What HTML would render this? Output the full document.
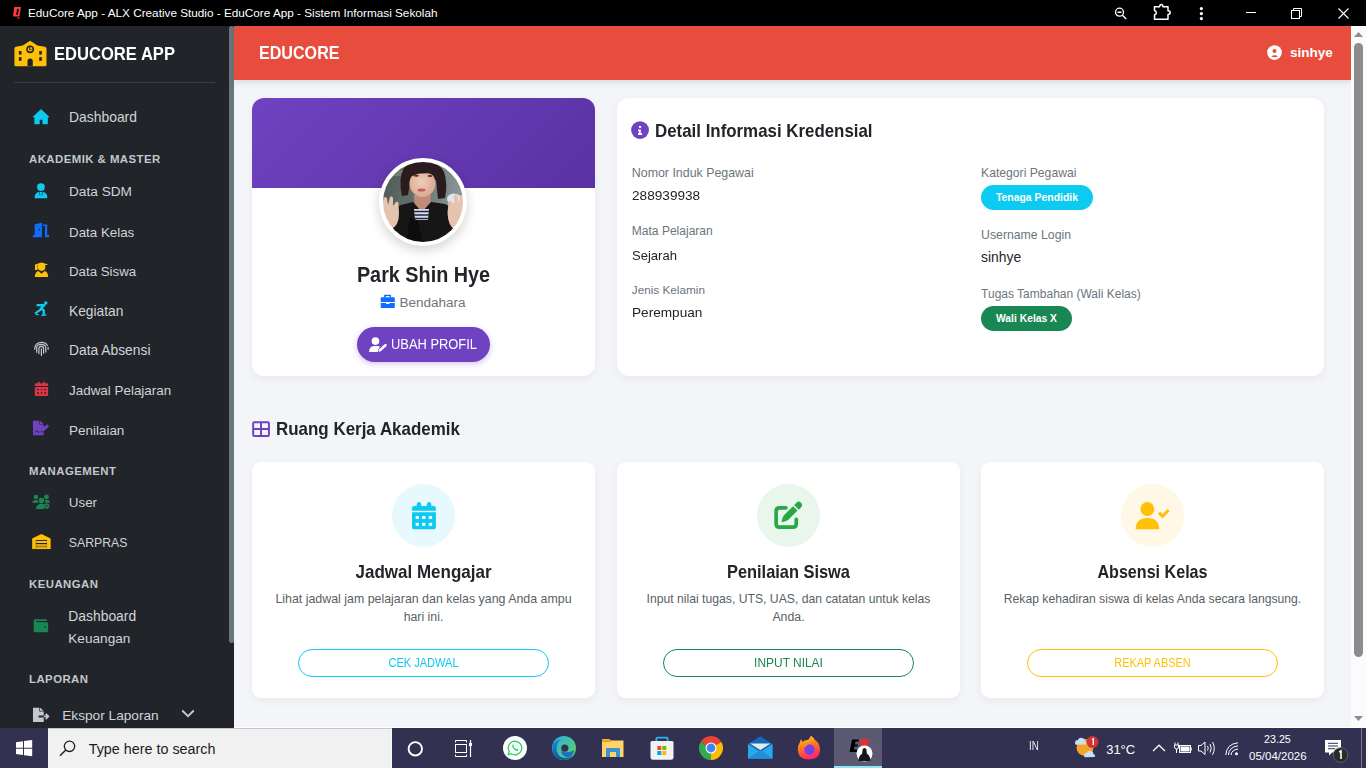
<!DOCTYPE html><html><head><meta charset="utf-8"><style>
*{margin:0;padding:0;box-sizing:border-box}
html,body{width:1366px;height:768px;overflow:hidden;background:#f3f5f9;font-family:"Liberation Sans",sans-serif}
.t{position:absolute;line-height:1;white-space:nowrap}
svg{position:absolute;overflow:visible}
</style></head><body>
<div style="position:absolute;left:0px;top:0px;width:1366px;height:26px;background:#000"></div>
<div class="t" style="left:28px;top:6.75px;font-size:11.76px;color:#fff;font-weight:400;">EduCore App - ALX Creative Studio - EduCore App - Sistem Informasi Sekolah</div>
<svg style="left:8px;top:2px" width="24" height="24" viewBox="0 0 768 768" ><path fill-rule="evenodd" d="M200 160 L415 160 L365 465 L160 465Z M290 225 L345 225 L320 410 L258 410Z" fill="#ff3b3b"/><rect x="290" y="490" width="90" height="45" fill="#c02020"/></svg>
<svg style="left:1114px;top:7px" width="14" height="13" viewBox="0 0 14 13"><circle cx="5.5" cy="5.2" r="4" stroke="#fff" stroke-width="1.3" fill="none"/><path d="M3.5 5.2 L7.5 5.2 M8.4 8.2 L12.2 12" stroke="#fff" stroke-width="1.4"/></svg>
<svg style="left:1153px;top:4px" width="19" height="17" viewBox="0 0 19 17"><path d="M1.5 2.8 L6.5 2.8 Q6.8 0.5 8.3 0.5 Q9.8 0.5 10.1 2.8 L15 2.8 L15 6.7 Q17.2 6.9 17.2 8.6 Q17.2 10.4 15 10.6 L15 15.3 L1.5 15.3 L1.5 10.8 Q3.3 10.5 3.3 8.7 Q3.3 6.9 1.5 6.6 Z" stroke="#fff" stroke-width="1.5" fill="none" stroke-linejoin="round"/></svg>
<svg style="left:1198px;top:6px" width="6" height="15" viewBox="0 0 6 15"><circle cx="3.4" cy="2.6" r="1.6" fill="#fff"/><circle cx="3.4" cy="7.6" r="1.6" fill="#fff"/><circle cx="3.4" cy="12.6" r="1.6" fill="#fff"/></svg>
<div style="position:absolute;left:1246px;top:12px;width:10px;height:1px;background:#fff"></div>
<svg style="left:1291px;top:8px" width="12" height="11" viewBox="0 0 12 11"><rect x="0.5" y="2.5" width="8" height="8" stroke="#fff" stroke-width="1" fill="none"/><path d="M2.5 2.5 L2.5 0.5 L10.5 0.5 L10.5 8.5 L8.5 8.5" stroke="#fff" stroke-width="1" fill="none"/></svg>
<svg style="left:1338px;top:8px" width="11" height="11" viewBox="0 0 11 11"><path d="M0.5 0.5 L10.5 10.5 M10.5 0.5 L0.5 10.5" stroke="#fff" stroke-width="1.1"/></svg>
<div style="position:absolute;left:0px;top:26px;width:234px;height:702px;background:#212529"></div>
<div style="position:absolute;left:229px;top:26px;width:5px;height:617px;background:#6c757d;border-radius:3px"></div>
<div style="position:absolute;left:14px;top:82px;width:201px;height:1px;background:#3a3e43"></div>
<div class="t" style="left:53.5px;top:44.73px;font-size:18.16px;color:#fff;font-weight:700;transform:scaleX(0.9131);transform-origin:0 0;">EDUCORE APP</div>
<svg style="left:10px;top:36px" width="40" height="40" viewBox="0 0 904 904" ><path d="M130 245 L290 215 L455 110 L620 215 L790 245 Q825 255 825 290 L825 650 Q825 685 790 685 L135 685 Q100 685 100 650 L100 290 Q100 255 130 245Z" fill="#ffc107"/><circle cx="455" cy="300" r="88" fill="#212529"/><circle cx="455" cy="300" r="52" fill="#ffc107"/><path d="M445 250 L445 310 L490 310" stroke="#212529" stroke-width="22" fill="none"/><rect x="200" y="340" width="60" height="80" fill="#212529"/><rect x="200" y="478" width="60" height="82" fill="#212529"/><rect x="660" y="340" width="60" height="80" fill="#212529"/><rect x="660" y="478" width="60" height="82" fill="#212529"/><path d="M395 685 L395 570 Q395 510 455 510 Q515 510 515 570 L515 685Z" fill="#212529"/></svg>
<svg style="left:30px;top:105px" width="24" height="24" viewBox="0 0 768 768" ><path d="M95 385 L355 140 L610 385 L560 385 L560 605 L410 605 L410 475 Q355 455 300 475 L300 605 L150 605 L150 385Z" fill="#0dcaf0" stroke="#0dcaf0" stroke-width="20" stroke-linejoin="round"/></svg>
<svg style="left:30px;top:180px" width="24" height="24" viewBox="0 0 768 768" ><circle cx="350" cy="225" r="125" fill="#0dcaf0"/><path d="M145 580 Q150 395 290 385 L410 385 Q555 395 555 580Z" fill="#0dcaf0"/><path d="M300 390 L320 500 M400 390 L380 500" stroke="#212529" stroke-width="22"/></svg>
<svg style="left:30px;top:219px" width="24" height="24" viewBox="0 0 768 768" ><path d="M150 170 L385 120 L385 580 L95 580 L95 510 L150 510Z" fill="#0d6efd"/><circle cx="300" cy="340" r="25" fill="#212529"/><path d="M410 175 L550 175 L550 510 L610 510 L610 580 L480 580 L480 225 L410 225Z" fill="#0d6efd"/></svg>
<svg style="left:30px;top:258px" width="24" height="24" viewBox="0 0 768 768" ><circle cx="370" cy="290" r="122" fill="#ffc107"/><path d="M155 205 L370 140 L580 205 L370 260Z" fill="#ffc107"/><rect x="160" y="215" width="80" height="170" fill="#ffc107"/><path d="M155 610 Q160 450 270 415 L370 505 L470 415 Q580 450 580 610Z" fill="#ffc107"/></svg>
<svg style="left:30px;top:298px" width="24" height="24" viewBox="0 0 768 768" ><circle cx="505" cy="160" r="55" fill="#0dcaf0"/><path d="M240 230 L460 230 L345 330 L440 400 L440 520" stroke="#0dcaf0" stroke-width="75" fill="none" stroke-linejoin="round" stroke-linecap="round"/><path d="M330 380 L200 470" stroke="#0dcaf0" stroke-width="65" stroke-linecap="round"/><path d="M165 470 Q180 535 270 535 M375 555 L510 540" stroke="#0dcaf0" stroke-width="40" fill="none" stroke-linecap="round"/></svg>
<svg style="left:30px;top:337px" width="24" height="24" viewBox="0 0 768 768" ><g stroke="#c3c8cd" stroke-width="38" fill="none" stroke-linecap="round"><path d="M150 390 C150 240 250 170 365 170 C460 170 530 210 555 275"/><path d="M580 335 L580 395"/><path d="M215 490 L215 330 C215 265 280 235 365 235 C440 240 495 280 505 330 L505 480"/><path d="M285 530 L285 370 C285 320 320 300 365 300 C410 300 435 330 435 370 L435 520"/><path d="M365 380 L365 590"/></g></svg>
<svg style="left:30px;top:377px" width="24" height="24" viewBox="0 0 768 768" ><rect x="255" y="150" width="65" height="80" rx="30" fill="#dc3545"/><rect x="420" y="150" width="65" height="80" rx="30" fill="#dc3545"/><path d="M155 290 L155 240 Q155 200 195 200 L540 200 Q580 200 580 240 L580 290Z" fill="#dc3545"/><path d="M155 320 L580 320 L580 570 Q580 610 540 610 L195 610 Q155 610 155 570Z" fill="#dc3545"/><g fill="#212529"><rect x="225" y="385" width="60" height="35"/><rect x="345" y="385" width="45" height="35"/><rect x="455" y="385" width="60" height="35"/><rect x="225" y="490" width="60" height="45"/><rect x="350" y="485" width="35" height="55"/><rect x="455" y="490" width="60" height="45"/></g></svg>
<svg style="left:30px;top:417px" width="24" height="24" viewBox="0 0 768 768" ><path d="M95 120 L300 120 L300 240 L440 240 L440 380 L330 490 L440 490 L440 580 L95 580Z" fill="#6f42c1"/><path d="M320 120 L440 225 L320 225Z" fill="#6f42c1"/><path d="M380 440 L580 270" stroke="#6f42c1" stroke-width="95" stroke-linecap="butt"/><path d="M170 495 L225 430 L260 490 L300 470" stroke="#212529" stroke-width="28" fill="none"/></svg>
<svg style="left:30px;top:490px" width="24" height="24" viewBox="0 0 768 768" ><circle cx="190" cy="220" r="72" fill="#198754"/><circle cx="528" cy="220" r="78" fill="#198754"/><circle cx="365" cy="335" r="88" fill="#198754"/><path d="M70 410 Q90 320 190 320 Q240 320 262 345 L262 410Z" fill="#198754"/><path d="M480 320 L560 320 Q640 330 640 410 L480 410Z" fill="#198754"/><path d="M190 610 Q200 450 365 440 Q425 440 445 460 L445 610Z" fill="#198754"/><circle cx="530" cy="510" r="80" fill="#198754" stroke="#198754" stroke-width="30" stroke-dasharray="40 30"/><circle cx="530" cy="505" r="28" fill="#212529"/></svg>
<svg style="left:30px;top:530px" width="24" height="24" viewBox="0 0 768 768" ><path d="M70 610 L70 270 L365 130 L660 270 L660 610 L545 610 L545 320 L185 320 L185 610Z" fill="#ffc107"/><rect x="195" y="350" width="345" height="65" fill="#ffc107"/><rect x="195" y="450" width="345" height="85" fill="#d9a520"/><rect x="195" y="550" width="345" height="60" fill="#ffc107"/></svg>
<svg style="left:30px;top:614px" width="24" height="24" viewBox="0 0 768 768" ><path d="M165 170 L540 170 L540 225 L195 225 Q175 235 195 255 L535 260 Q580 270 580 305 L580 540 Q580 580 540 580 L165 580 Q120 580 120 540 L120 215 Q120 170 165 170Z" fill="#198754"/><circle cx="490" cy="420" r="25" fill="#212529"/></svg>
<svg style="left:30px;top:703px" width="24" height="24" viewBox="0 0 768 768" ><path d="M95 150 L300 150 L300 270 L440 270 L440 400 L275 400 L275 460 L440 460 L440 610 L95 610Z" fill="#c3c8cd"/><path d="M320 150 L440 250 L320 250Z" fill="#c3c8cd"/><path d="M440 430 L580 430 M500 345 L590 430 L500 515" stroke="#c3c8cd" stroke-width="55" fill="none" stroke-linejoin="round"/></svg>
<svg style="left:181px;top:709px" width="14" height="9" viewBox="0 0 14 9"><path d="M1.2 1.5 L7 7.2 L12.8 1.5" stroke="#c3c8cd" stroke-width="1.9" fill="none"/></svg>
<div class="t" style="left:69px;top:111.33px;font-size:13.9px;color:#d0d4d8;font-weight:400;">Dashboard</div>
<div class="t" style="left:69px;top:185.14px;font-size:13.66px;color:#d0d4d8;font-weight:400;">Data SDM</div>
<div class="t" style="left:69px;top:225.50px;font-size:13.35px;color:#d0d4d8;font-weight:400;">Data Kelas</div>
<div class="t" style="left:69px;top:265.05px;font-size:13.29px;color:#d0d4d8;font-weight:400;">Data Siswa</div>
<div class="t" style="left:69px;top:304.66px;font-size:13.75px;color:#d0d4d8;font-weight:400;">Kegiatan</div>
<div class="t" style="left:69px;top:343.99px;font-size:13.83px;color:#d0d4d8;font-weight:400;">Data Absensi</div>
<div class="t" style="left:69px;top:383.73px;font-size:13.43px;color:#d0d4d8;font-weight:400;">Jadwal Pelajaran</div>
<div class="t" style="left:69px;top:423.51px;font-size:13.46px;color:#d0d4d8;font-weight:400;">Penilaian</div>
<div class="t" style="left:68.8px;top:496.36px;font-size:13.4px;color:#d0d4d8;font-weight:400;">User</div>
<div class="t" style="left:68.8px;top:537.32px;font-size:12.26px;color:#d0d4d8;font-weight:400;">SARPRAS</div>
<div class="t" style="left:68.3px;top:610.15px;font-size:13.88px;color:#d0d4d8;font-weight:400;">Dashboard</div>
<div class="t" style="left:68.3px;top:631.57px;font-size:13.62px;color:#d0d4d8;font-weight:400;">Keuangan</div>
<div class="t" style="left:62.2px;top:709.22px;font-size:13.68px;color:#d0d4d8;font-weight:400;">Ekspor Laporan</div>
<div class="t" style="left:29px;top:153.85px;font-size:11.4px;color:#c2c8ce;font-weight:700;letter-spacing:0.45px;">AKADEMIK &amp; MASTER</div>
<div class="t" style="left:29px;top:465.85px;font-size:11.4px;color:#c2c8ce;font-weight:700;letter-spacing:0.45px;">MANAGEMENT</div>
<div class="t" style="left:29px;top:578.95px;font-size:11.4px;color:#c2c8ce;font-weight:700;letter-spacing:0.45px;">KEUANGAN</div>
<div class="t" style="left:29px;top:673.95px;font-size:11.4px;color:#c2c8ce;font-weight:700;letter-spacing:0.45px;">LAPORAN</div>
<div style="position:absolute;left:234px;top:26px;width:1117px;height:54px;background:#e74c3c;box-shadow:0 2px 6px rgba(0,0,0,.12)"></div>
<div class="t" style="left:258.6px;top:44.29px;font-size:18.44px;color:#fff;font-weight:700;transform:scaleX(0.8730);transform-origin:0 0;">EDUCORE</div>
<div class="t" style="left:1290px;top:46.26px;font-size:13.51px;color:#fff;font-weight:700;">sinhye</div>
<svg style="left:1262px;top:41px" width="24" height="24" viewBox="0 0 768 768" ><circle cx="400" cy="370" r="235" fill="#fff"/><circle cx="400" cy="318" r="64" fill="#e74c3c"/><path d="M295 495 Q400 420 510 495 Q400 545 295 495Z" fill="#e74c3c"/></svg>
<div style="position:absolute;left:252px;top:98px;width:343px;height:278px;background:#fff;border-radius:12px;box-shadow:0 3px 8px rgba(0,0,0,.055)"></div>
<div style="position:absolute;left:252px;top:98px;width:343px;height:90px;background:linear-gradient(135deg,#6f42c1,#5a32a3);border-radius:12px 12px 0 0"></div>
<div style="position:absolute;left:379px;top:158px;width:88px;height:88px;border-radius:50%;background:#fff;box-shadow:0 4px 12px rgba(0,0,0,.18)"></div>
<svg style="left:383px;top:162px" width="80" height="80" viewBox="0 0 80 80">
<defs><clipPath id="av"><circle cx="40" cy="40" r="40"/></clipPath>
<linearGradient id="avbg" x1="0" y1="0" x2="1" y2="0.2"><stop offset="0" stop-color="#4e5852"/><stop offset="0.5" stop-color="#65716e"/><stop offset="1" stop-color="#8d979b"/></linearGradient>
<radialGradient id="face" cx="0.45" cy="0.45" r="0.6"><stop offset="0" stop-color="#f0cdb8"/><stop offset="1" stop-color="#d9a78f"/></radialGradient>
<filter id="bl" x="-10%" y="-10%" width="120%" height="120%"><feGaussianBlur stdDeviation="0.5"/></filter></defs>
<g clip-path="url(#av)"><g filter="url(#bl)">
<rect x="-2" y="-2" width="84" height="84" fill="url(#avbg)"/>
<rect x="0" y="8" width="22" height="6" fill="#7b8682" opacity="0.7"/>
<ellipse cx="71" cy="37" rx="7" ry="5.5" fill="#e4e4ec"/>
<path d="M19 34 Q15 16 21 6 Q30 -2 42 -1 Q56 0 61 10 Q65 22 62 36 L55 37 L53 18 L27 20 L25 33Z" fill="#2a1f1a"/>
<path d="M31 33 L48 33 L47 47 L32 47Z" fill="#c08c77"/>
<ellipse cx="39.5" cy="21.5" rx="13" ry="13.5" fill="url(#face)"/>
<path d="M25 17 Q26 4 40 4 Q54 5 54 17 Q49 10 40 11.5 Q32 11 25 17Z" fill="#2a1f1a"/>
<ellipse cx="33.3" cy="13.8" rx="2.4" ry="1" fill="#4a2e25"/><ellipse cx="47" cy="14" rx="2.4" ry="1" fill="#4a2e25"/>
<ellipse cx="38.5" cy="28" rx="4" ry="1.5" fill="#c65a5e"/>
<path d="M-2 82 L2 58 Q8 46 18 43 L30 40 L39 50 L48 40 L62 42 Q72 46 76 58 L82 82Z" fill="#121212"/>
<path d="M31 47 L46 47 L45 58 L32 58Z" fill="#d8dde8"/>
<path d="M31 49.5 L46 49.5 M31 53 L46 53 M32 56.5 L45 56.5" stroke="#1d2648" stroke-width="1.6"/>
<path d="M34 58 L40 82 L24 82 L27 56Z" fill="#0a0a0a"/>
<path d="M-2 45 L1 36 Q2.5 34 4 36.5 L5 43 L7 35 Q9 33 10 36 L10 44 L13 40 Q15 39 15.5 41 L16 52 Q16 64 8 67 Q0 66 -2 58Z" fill="#e6c3ae"/>
<path d="M82 44 L80 34 Q78.5 32 77 34.5 L76 41 L74 33 Q72 31 71 34 L71 43 L68 39 Q66 38 65.5 40 L64.5 51 Q65 64 72 68 Q81 67 82 60Z" fill="#e6c3ae"/>
</g></g></svg>
<div class="t" style="left:252px;top:263.98px;font-size:22.35px;color:#212529;font-weight:700;width:343px;text-align:center;transform:scaleX(0.8862);transform-origin:50% 0;">Park Shin Hye</div>
<div class="t" style="left:399.4px;top:295.65px;font-size:13.53px;color:#6c757d;font-weight:400;">Bendahara</div>
<div style="position:absolute;left:357px;top:327px;width:133px;height:35px;background:#6f42c1;border-radius:18px;box-shadow:0 2px 6px rgba(111,66,193,.3)"></div>
<div class="t" style="left:391.2px;top:338.09px;font-size:13.83px;color:#fff;font-weight:400;transform:scaleX(0.9326);transform-origin:0 0;">UBAH PROFIL</div>
<svg style="left:374px;top:290px" width="24" height="24" viewBox="0 0 768 768" ><path fill-rule="evenodd" d="M320 175 Q320 155 345 155 L520 155 Q545 155 545 175 L545 235 L495 235 L495 195 L380 195 L380 235 L320 235Z" fill="#0d6efd"/><path d="M215 265 Q215 230 250 230 L630 230 Q665 230 665 265 L665 385 L215 385Z" fill="#0d6efd"/><path d="M215 415 L385 415 L385 450 L495 450 L495 415 L665 415 L665 545 Q665 575 635 575 L245 575 Q215 575 215 545Z" fill="#0d6efd"/></svg>
<svg style="left:364px;top:330px" width="32" height="32" viewBox="0 0 768 768" ><circle cx="275" cy="265" r="92" fill="#fff"/><path d="M120 525 Q125 385 260 385 L330 385 Q365 388 385 400 L340 470 L340 525Z" fill="#fff"/><path d="M380 490 L515 365" stroke="#fff" stroke-width="62" stroke-linecap="round"/></svg>
<div style="position:absolute;left:617px;top:98px;width:707px;height:278px;background:#fff;border-radius:12px;box-shadow:0 3px 8px rgba(0,0,0,.055)"></div>
<div class="t" style="left:654.6px;top:121.55px;font-size:18.02px;color:#212529;font-weight:700;transform:scaleX(0.9366);transform-origin:0 0;">Detail Informasi Kredensial</div>
<div class="t" style="left:631.8px;top:167.00px;font-size:12.4px;color:#6c757d;font-weight:400;">Nomor Induk Pegawai</div>
<div class="t" style="left:631.8px;top:189.27px;font-size:13.27px;color:#212529;font-weight:400;transform:scaleX(1.0268);transform-origin:0 0;">288939938</div>
<div class="t" style="left:631.8px;top:225.01px;font-size:12.04px;color:#6c757d;font-weight:400;">Mata Pelajaran</div>
<div class="t" style="left:631.8px;top:248.77px;font-size:13.27px;color:#212529;font-weight:400;transform:scaleX(0.9838);transform-origin:0 0;">Sejarah</div>
<div class="t" style="left:631.8px;top:284.25px;font-size:11.76px;color:#6c757d;font-weight:400;">Jenis Kelamin</div>
<div class="t" style="left:631.8px;top:306.37px;font-size:13.27px;color:#212529;font-weight:400;transform:scaleX(1.0262);transform-origin:0 0;">Perempuan</div>
<div class="t" style="left:981.1px;top:167.41px;font-size:12.16px;color:#6c757d;font-weight:400;">Kategori Pegawai</div>
<div style="position:absolute;left:981px;top:185px;width:112px;height:25px;background:#0dcaf0;border-radius:13px"></div>
<div class="t" style="left:981px;top:192.85px;font-size:10.45px;color:#fff;font-weight:700;width:112px;text-align:center;">Tenaga Pendidik</div>
<div class="t" style="left:981.1px;top:229.13px;font-size:12.25px;color:#6c757d;font-weight:400;">Username Login</div>
<div class="t" style="left:981.1px;top:251.26px;font-size:13.87px;color:#212529;font-weight:400;">sinhye</div>
<div class="t" style="left:981.1px;top:288.04px;font-size:12.0px;color:#6c757d;font-weight:400;">Tugas Tambahan (Wali Kelas)</div>
<div style="position:absolute;left:981px;top:306px;width:91px;height:25px;background:#198754;border-radius:13px"></div>
<div class="t" style="left:981px;top:314.06px;font-size:10.32px;color:#fff;font-weight:700;width:91px;text-align:center;">Wali Kelas X</div>
<div class="t" style="left:275.6px;top:420.45px;font-size:18.72px;color:#212529;font-weight:700;transform:scaleX(0.9059);transform-origin:0 0;">Ruang Kerja Akademik</div>
<svg style="left:628px;top:118px" width="24" height="24" viewBox="0 0 768 768" ><circle cx="385" cy="385" r="285" fill="#6f42c1"/><rect x="350" y="255" width="70" height="60" fill="#fff"/><path d="M325 365 L410 365 L410 480 L450 480 L450 540 L320 540 L320 480 L350 480 L350 420 L325 420Z" fill="#fff"/></svg>
<svg style="left:248px;top:417px" width="24" height="24" viewBox="0 0 768 768" ><rect x="165" y="165" width="505" height="440" rx="40" stroke="#6f42c1" stroke-width="62" fill="none"/><path d="M417 165 L417 605 M165 385 L670 385" stroke="#6f42c1" stroke-width="62"/></svg>
<div style="position:absolute;left:252px;top:462px;width:343px;height:236px;background:#fff;border-radius:9px;box-shadow:0 3px 8px rgba(0,0,0,.055)"></div>
<div style="position:absolute;left:392px;top:484px;width:63px;height:63px;background:#e7f9fd;border-radius:50%"></div>
<div class="t" style="left:252px;top:562.65px;font-size:18.02px;color:#212529;font-weight:700;width:343px;text-align:center;transform:scaleX(0.9437);transform-origin:50% 0;">Jadwal Mengajar</div>
<div class="t" style="left:252px;top:592.80px;font-size:12.4px;color:#595f66;font-weight:400;width:343px;text-align:center;">Lihat jadwal jam pelajaran dan kelas yang Anda ampu</div>
<div class="t" style="left:252px;top:610.89px;font-size:12.3px;color:#595f66;font-weight:400;width:343px;text-align:center;">hari ini.</div>
<div style="position:absolute;left:298px;top:649px;width:251px;height:28px;border:1px solid #0dcaf0;border-radius:14px"></div>
<div class="t" style="left:252px;top:656.72px;font-size:12.85px;color:#0dcaf0;font-weight:400;width:343px;text-align:center;transform:scaleX(0.8599);transform-origin:50% 0;">CEK JADWAL</div>
<div style="position:absolute;left:617px;top:462px;width:343px;height:236px;background:#fff;border-radius:9px;box-shadow:0 3px 8px rgba(0,0,0,.055)"></div>
<div style="position:absolute;left:757px;top:484px;width:63px;height:63px;background:#e9f6ec;border-radius:50%"></div>
<div class="t" style="left:617px;top:562.65px;font-size:18.02px;color:#212529;font-weight:700;width:343px;text-align:center;transform:scaleX(0.9097);transform-origin:50% 0;">Penilaian Siswa</div>
<div class="t" style="left:617px;top:592.98px;font-size:12.19px;color:#595f66;font-weight:400;width:343px;text-align:center;">Input nilai tugas, UTS, UAS, dan catatan untuk kelas</div>
<div class="t" style="left:617px;top:610.89px;font-size:12.3px;color:#595f66;font-weight:400;width:343px;text-align:center;">Anda.</div>
<div style="position:absolute;left:663px;top:649px;width:251px;height:28px;border:1px solid #198754;border-radius:14px"></div>
<div class="t" style="left:617px;top:656.72px;font-size:12.85px;color:#198754;font-weight:400;width:343px;text-align:center;transform:scaleX(0.9294);transform-origin:50% 0;">INPUT NILAI</div>
<div style="position:absolute;left:981px;top:462px;width:343px;height:236px;background:#fff;border-radius:9px;box-shadow:0 3px 8px rgba(0,0,0,.055)"></div>
<div style="position:absolute;left:1121px;top:484px;width:63px;height:63px;background:#fff8e6;border-radius:50%"></div>
<div class="t" style="left:981px;top:562.65px;font-size:18.02px;color:#212529;font-weight:700;width:343px;text-align:center;transform:scaleX(0.8937);transform-origin:50% 0;">Absensi Kelas</div>
<div class="t" style="left:981px;top:593.01px;font-size:12.16px;color:#595f66;font-weight:400;width:343px;text-align:center;">Rekap kehadiran siswa di kelas Anda secara langsung.</div>
<div style="position:absolute;left:1027px;top:649px;width:251px;height:28px;border:1px solid #ffc107;border-radius:14px"></div>
<div class="t" style="left:981px;top:656.72px;font-size:12.85px;color:#ffc107;font-weight:400;width:343px;text-align:center;transform:scaleX(0.8534);transform-origin:50% 0;">REKAP ABSEN</div>
<svg style="left:385px;top:478px" width="80" height="80" viewBox="0 0 830 830" ><rect x="330" y="250" width="45" height="70" rx="22" fill="#0dcaf0"/><rect x="435" y="250" width="45" height="70" rx="22" fill="#0dcaf0"/><path d="M280 340 L280 315 Q280 290 305 290 L505 290 Q528 290 528 315 L528 340Z" fill="#0dcaf0"/><path d="M280 355 L528 355 L528 505 Q528 532 500 532 L308 532 Q280 532 280 505Z" fill="#0dcaf0"/><g fill="#fff"><rect x="318" y="395" width="34" height="30"/><rect x="385" y="395" width="34" height="30"/><rect x="455" y="395" width="34" height="30"/><rect x="318" y="465" width="34" height="30"/><rect x="385" y="465" width="34" height="30"/><rect x="455" y="465" width="34" height="30"/></g></svg>
<svg style="left:750px;top:478px" width="80" height="80" viewBox="0 0 830 830" ><path d="M372 310 L305 310 Q271 310 271 345 L271 475 Q271 510 305 510 L445 510 Q480 510 480 475 L480 428" stroke="#28a745" stroke-width="38" fill="none" stroke-linecap="round"/><path d="M326 460 Q335 410 352 387 L447 292 L493 338 L398 433 Q375 450 326 460Z" fill="#28a745"/><path d="M458 281 L485 254 Q505 236 527 254 L533 260 Q551 282 533 302 L506 329Z" fill="#28a745"/></svg>
<svg style="left:1112px;top:478px" width="80" height="80" viewBox="0 0 830 830" ><circle cx="367" cy="322" r="72" fill="#ffc107"/><path d="M245 532 Q248 415 367 415 Q487 415 490 532Z" fill="#ffc107"/><path d="M488 360 L525 398 L588 332" stroke="#ffc107" stroke-width="32" fill="none"/></svg>
<div style="position:absolute;left:1351px;top:26px;width:15px;height:702px;background:#fbfbfb"></div>
<div style="position:absolute;left:1354px;top:43px;width:9px;height:614px;background:#8c8c8c;border-radius:5px"></div>
<svg style="left:1354px;top:32px" width="9" height="5"><path d="M0 5 L4.5 0 L9 5Z" fill="#8c8c8c"/></svg>
<svg style="left:1354px;top:716px" width="9" height="5"><path d="M0 0 L4.5 5 L9 0Z" fill="#8c8c8c"/></svg>
<div style="position:absolute;left:234px;top:727px;width:1132px;height:1px;background:#fff"></div>
<div style="position:absolute;left:0px;top:728px;width:1366px;height:40px;background:#333152"></div>
<div style="position:absolute;left:48px;top:728px;width:344px;height:40px;background:#f1f1f1;border-top:1px solid #c6c6c6;border-right:1px solid #f8f8f8"></div>
<div class="t" style="left:88.7px;top:742.15px;font-size:14.35px;color:#1b1b1b;font-weight:400;">Type here to search</div>
<div class="t" style="left:1028.7px;top:739.19px;font-size:13.13px;color:#f0f0f0;font-weight:400;transform:scaleX(0.7464);transform-origin:0 0;">IN</div>
<div class="t" style="left:1106.2px;top:743.31px;font-size:12.98px;color:#fff;font-weight:400;">31°C</div>
<div class="t" style="left:1264px;top:733.93px;font-size:10.71px;color:#fff;font-weight:400;">23.25</div>
<div class="t" style="left:1249.1px;top:751.27px;font-size:11.49px;color:#fff;font-weight:400;">05/04/2026</div>
<svg style="left:16px;top:740px" width="17" height="17" viewBox="0 0 17 17"><path d="M0 2.3 L7 1.3 L7 7.7 L0 7.7Z M8 1.1 L16.2 0 L16.2 7.7 L8 7.7Z M0 8.7 L7 8.7 L7 15 L0 14Z M8 8.7 L16.2 8.7 L16.2 16.2 L8 15.2Z" fill="#fff"/></svg>
<svg style="left:59px;top:740px" width="18" height="17" viewBox="0 0 18 17"><circle cx="10.5" cy="6.3" r="5.2" stroke="#1b1b1b" stroke-width="1.3" fill="none"/><path d="M6.8 10 L1 15.8" stroke="#1b1b1b" stroke-width="1.4"/></svg>
<svg style="left:407px;top:741px" width="17" height="16" viewBox="0 0 17 16"><circle cx="8.3" cy="7.8" r="6.7" stroke="#fff" stroke-width="1.9" fill="none"/></svg>
<svg style="left:455px;top:740px" width="18" height="17" viewBox="0 0 18 17"><path d="M0.5 2.5 L0.5 0.5 L11.5 0.5 L11.5 2.5 M0.5 14.5 L0.5 16.5 L11.5 16.5 L11.5 14.5" stroke="#fff" stroke-width="1" fill="none"/><rect x="0.5" y="4.5" width="11" height="8" stroke="#fff" stroke-width="1" fill="none"/><path d="M15.5 0 L15.5 3 M15.5 6 L15.5 17" stroke="#fff" stroke-width="1.2"/><rect x="14" y="3" width="3" height="3" fill="#fff"/></svg>
<svg style="left:503px;top:736px" width="24" height="24" viewBox="0 0 24 24"><circle cx="12" cy="12" r="12" fill="#fff"/><path d="M12 5.2 A6.8 6.8 0 1 1 8.4 17.8 L5.2 18.6 L6.3 15.6 A6.8 6.8 0 0 1 12 5.2Z" stroke="#25d366" stroke-width="1.3" fill="none"/><path d="M9.4 9 Q9.6 8.2 10.3 8.3 L11 9.8 L10.5 10.6 Q11.3 12.4 13.2 13.3 L14 12.8 L15.4 13.6 Q15.3 14.8 14.3 14.9 Q11 14.6 9.4 11 Q9.2 9.8 9.4 9Z" fill="#25d366"/></svg>
<svg style="left:552px;top:736px" width="24" height="24" viewBox="0 0 24 24"><defs><linearGradient id="edg" x1="0" y1="0" x2="1" y2="1"><stop offset="0" stop-color="#2fb0e8"/><stop offset="1" stop-color="#5fd35a"/></linearGradient><linearGradient id="edb" x1="0" y1="0" x2="0" y2="1"><stop offset="0" stop-color="#1b8ad8"/><stop offset="1" stop-color="#0c59a8"/></linearGradient></defs><circle cx="12" cy="12" r="12" fill="url(#edg)"/><path d="M0.3 10 Q2 3 10 3.5 Q4 6 4.6 14 Q5.5 21 13 22 Q18 22 21 19.5 Q18 24 11 24 Q3 23.5 0.5 16Z" fill="url(#edb)"/><circle cx="12.8" cy="12.2" r="3.6" fill="#333152"/><path d="M12 16 Q18 17 22 14 Q22 19 17 21.5 Q10 21 9 15Z" fill="#1e6fc0"/></svg>
<svg style="left:602px;top:739px" width="22" height="18" viewBox="0 0 22 18"><path d="M0 1 Q0 0 1 0 L7 0 L9 1.5 L21.5 1.5 L21.5 18 L0 18Z" fill="#ffd466"/><path d="M0 0.5 L7 0.5 L9 2 L9 3 L0 3Z" fill="#e7a614"/><path d="M4 18 L4 10 Q4 9 5 9 L17 9 Q18 9 18 10 L18 18 L14 18 L14 13 L8 13 L8 18Z" fill="#3b91d8"/></svg>
<svg style="left:650px;top:737px" width="24" height="23" viewBox="0 0 24 23"><path d="M6.3 5 L6.3 2 Q6.3 0.6 7.7 0.6 L16.3 0.6 Q17.7 0.6 17.7 2 L17.7 5" stroke="#23b6ef" stroke-width="1.8" fill="none"/><path d="M0.5 5.5 Q0.5 4 2 4 L22 4 Q23.5 4 23.5 5.5 L23.5 20.5 Q23.5 22.8 21 22.8 L3 22.8 Q0.5 22.8 0.5 20.5Z" fill="#f3f3f3"/><rect x="7.3" y="9" width="4" height="4" fill="#f25022"/><rect x="12.3" y="9" width="4" height="4" fill="#7fba00"/><rect x="7.3" y="14" width="4" height="4" fill="#00a4ef"/><rect x="12.3" y="14" width="4" height="4" fill="#ffb900"/></svg>
<svg style="left:699px;top:736px" width="24" height="24" viewBox="0 0 24 24"><path d="M12 12 L1.6 6 A12 12 0 0 1 22.4 6Z" fill="#ea4335"/><path d="M12 12 L22.4 6 A12 12 0 0 1 12 24Z" fill="#fbbc04"/><path d="M12 12 L12 24 A12 12 0 0 1 1.6 6Z" fill="#34a853"/><circle cx="12" cy="12" r="5.5" fill="#fff"/><circle cx="12" cy="12" r="4.4" fill="#4285f4"/></svg>
<svg style="left:748px;top:736px" width="25" height="23" viewBox="0 0 25 23"><path d="M0 8 L12.3 0.3 L24.5 8 L24.5 22.5 L0 22.5Z" fill="#0f6cbd"/><path d="M2 7.5 L22.5 7.5 L12.3 14Z" fill="#e8e8e8"/><path d="M0 8 L12.3 16 L24.5 8 L24.5 22.5 L0 22.5Z" fill="#29a8ea"/><path d="M0 22.5 L12.3 14 L24.5 22.5Z" fill="#1f8fd6"/></svg>
<svg style="left:797px;top:735px" width="24" height="25" viewBox="0 0 24 25"><defs><linearGradient id="ffg" x1="0" y1="0" x2="0.3" y2="1"><stop offset="0" stop-color="#ffe033"/><stop offset="0.5" stop-color="#ff7a1a"/><stop offset="1" stop-color="#ff2a6a"/></linearGradient></defs><path d="M14 0.5 Q17 3 18 5 Q23 8 23 15 Q23 24 12 24.5 Q1 24.5 0.8 15 Q0.8 10 3 7 L4 4 L5.5 7 Q8 4.5 11 5 Q13 3 14 0.5Z" fill="url(#ffg)"/><circle cx="12.5" cy="14.5" r="5.2" fill="#7542e5"/><path d="M4 11 Q7 8 12 9 Q10 10 8.5 12Z" fill="#ff8a1a"/></svg>
<div style="position:absolute;left:834px;top:728px;width:48px;height:38px;background:#5c5a72"></div>
<div style="position:absolute;left:834px;top:766px;width:48px;height:2px;background:#8ce6f5"></div>
<svg style="left:849px;top:738px" width="25" height="25" viewBox="0 0 25 25"><path d="M3 1.5 L10 1.5 L9.5 3.5 L6.5 3.5 L6 6.5 L9 6.5 L8.6 8.5 L5.6 8.5 L5 11.5 L8.5 11.5 L8 14 L0.5 14Z" fill="#000"/><path d="M11 1 L20 1 L18 12 L13 13 Z" fill="#e53030"/><circle cx="15.5" cy="15.5" r="8" fill="#fff"/><path d="M9.5 23 Q10 17 13 16 L13.5 13 Q13 10.5 15.5 10 Q18 10.5 17.5 13 L18 16 Q21 17 21.5 23Z" fill="#15171c"/></svg>
<svg style="left:1074px;top:735px" width="26" height="24" viewBox="0 0 26 24"><circle cx="11" cy="12.5" r="8.5" fill="#f5a524"/><path d="M1 8 Q1 5 4 5 Q5 2 8.5 3 Q11 3.5 11 6.5 Q13 7 12.5 9.5 L2 9.8 Q1 9.5 1 8Z" fill="#c9dff2"/><path d="M10 21 Q9.5 18 12.5 18 Q13.5 15 17 16 Q19.5 16.5 19.5 19 Q21.5 19.5 21 22 L11 22.3 Q10 22 10 21Z" fill="#c9dff2"/><circle cx="18.5" cy="7" r="6" fill="#d13438"/><path d="M18 4.5 L19.3 3.8 L19.3 10" stroke="#fff" stroke-width="1.3" fill="none"/></svg>
<svg style="left:1152px;top:744px" width="14" height="8" viewBox="0 0 14 8"><path d="M1 7 L7 1.2 L13 7" stroke="#fff" stroke-width="1.2" fill="none"/></svg>
<svg style="left:1174px;top:742px" width="18" height="12" viewBox="0 0 18 12"><path d="M1 0.5 L1 3 M4 0.5 L4 3 M0.5 3 L4.5 3 L4.5 5 Q4.5 7 2.5 7 Q0.5 7 0.5 5Z M2.5 7 L2.5 11" stroke="#fff" stroke-width="1" fill="none"/><rect x="5.5" y="3.5" width="11" height="7" stroke="#fff" stroke-width="1" fill="none"/><rect x="6.5" y="4.5" width="9" height="5" fill="#fff"/><rect x="16.5" y="5.5" width="1.2" height="3" fill="#fff"/></svg>
<svg style="left:1198px;top:741px" width="18" height="15" viewBox="0 0 18 15"><path d="M0.5 4.5 L3 4.5 L7 1 L7 13.5 L3 10 L0.5 10Z" stroke="#fff" stroke-width="1" fill="none"/><path d="M9.5 5 Q11 7.2 9.5 9.5 M12 3 Q14.5 7.2 12 11.5 M14.5 1 Q18 7.2 14.5 13.8" stroke="#fff" stroke-width="1" fill="none"/></svg>
<svg style="left:1225px;top:742px" width="14" height="14" viewBox="0 0 14 14"><path d="M0.8 13 Q1.5 2 13 0.8 M3.4 13 Q4 5 13 3.8 M6 13 Q6.5 8 13 7" stroke="#fff" stroke-width="1" fill="none"/><circle cx="11.5" cy="11.8" r="1.5" fill="#fff"/></svg>
<svg style="left:1324px;top:739px" width="24" height="24" viewBox="0 0 24 24"><path d="M1 1 L17 1 L17 13.5 L8 13.5 L5 16.5 L5 13.5 L1 13.5Z" fill="#fff"/><path d="M4 4.3 L14 4.3 M4 7 L14 7 M4 9.7 L11 9.7" stroke="#333152" stroke-width="1"/><circle cx="16.5" cy="16" r="7.3" fill="#2b2b2b" stroke="#6b6b6b" stroke-width="0.8"/><path d="M15.2 13.2 L17 12 L17 20" stroke="#fff" stroke-width="1.6" fill="none"/></svg>
<div style="position:absolute;left:1361px;top:728px;width:1px;height:40px;background:#7a7890"></div>
</body></html>
